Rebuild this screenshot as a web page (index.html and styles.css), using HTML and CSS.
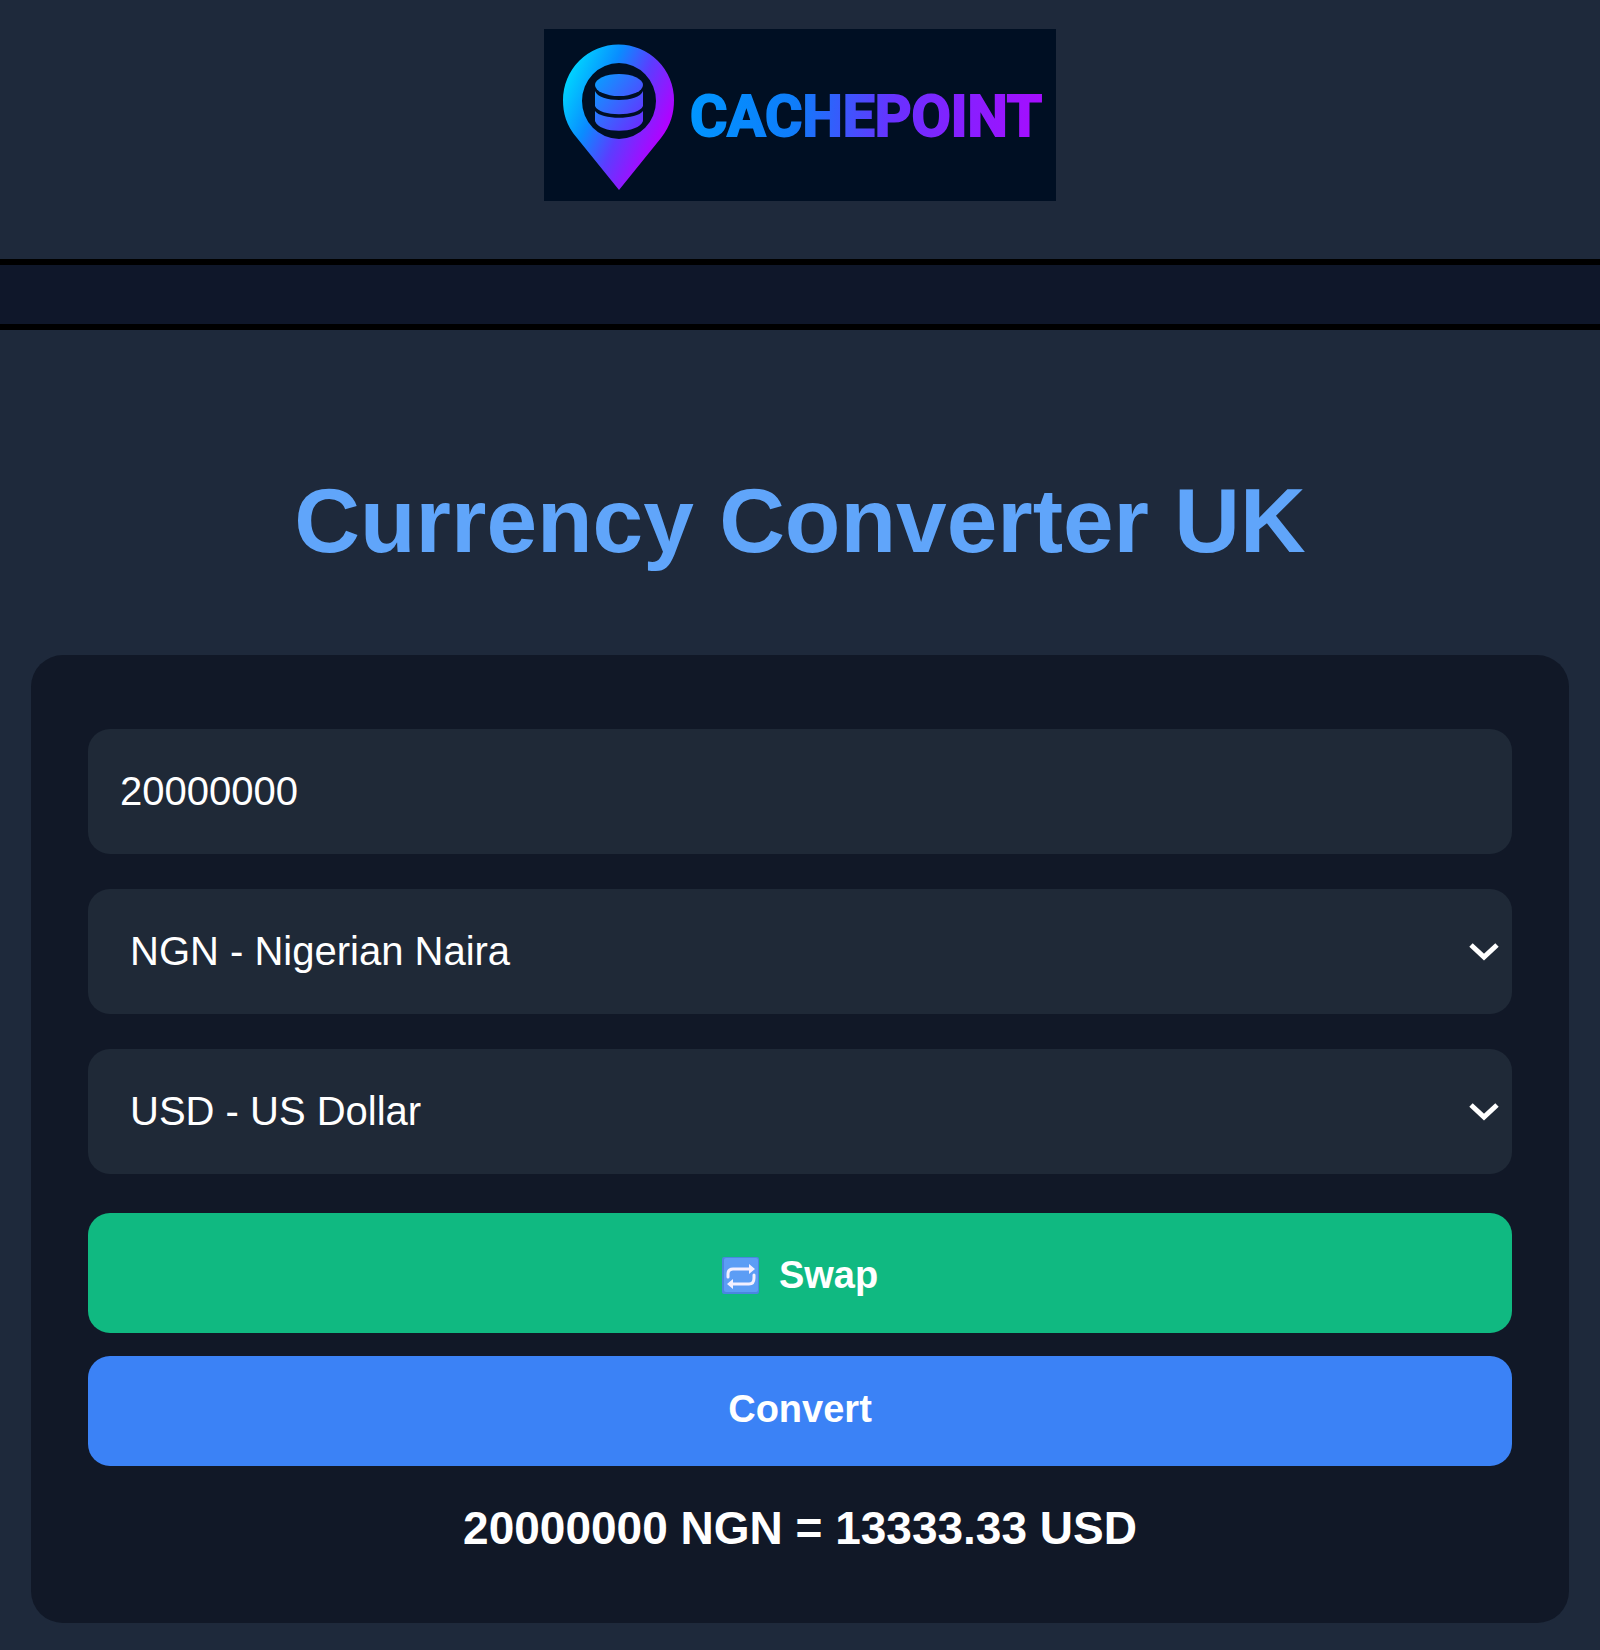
FILE: index.html
```html
<!DOCTYPE html>
<html lang="en">
<head>
  <meta charset="UTF-8">
  <meta name="viewport" content="width=device-width, initial-scale=1.0">
  <title>Currency Converter UK</title>
  <link rel="stylesheet" href="styles.css">
</head>
<body>

  <header class="site-header">
    <svg class="logo" viewBox="0 0 512 172" role="img" aria-label="CachePoint">
      <defs>
        <linearGradient id="pinFill" gradientUnits="userSpaceOnUse" x1="22" y1="56" x2="122" y2="102">
          <stop offset="0" stop-color="#00d0ff"/>
          <stop offset="0.32" stop-color="#0a8cff"/>
          <stop offset="0.62" stop-color="#5b3dff"/>
          <stop offset="1" stop-color="#b400ff"/>
        </linearGradient>
        <linearGradient id="diskFill" gradientUnits="userSpaceOnUse" x1="50" y1="52" x2="102" y2="92">
          <stop offset="0" stop-color="#0a9cff"/>
          <stop offset="1" stop-color="#6a2cff"/>
        </linearGradient>
        <linearGradient id="wordFill" gradientUnits="userSpaceOnUse" x1="148" y1="62" x2="498" y2="106">
          <stop offset="0" stop-color="#0096ff"/>
          <stop offset="0.3" stop-color="#0f7cfa"/>
          <stop offset="0.58" stop-color="#6a30ff"/>
          <stop offset="1" stop-color="#a80cff"/>
        </linearGradient>
      </defs>
      <rect width="512" height="172" fill="#000f23"/>
      <path fill="url(#pinFill)" fill-rule="evenodd" d="M75 161 L33 109 C22 96 19 84 19 71 A55 55 0 0 1 130 71 C130 84 127 96 117 109 Z M75 34 A37 38 0 1 0 75 110 A37 38 0 1 0 75 34 Z"/>
      <g fill="url(#diskFill)">
        <ellipse cx="75" cy="56" rx="24" ry="11"/>
        <path d="M51 62 C55 74 95 74 99 62 V77 C95 88 55 88 51 77 Z"/>
        <path d="M51 82 C57 91 93 91 99 82 V92 C95 105 55 105 51 92 Z"/>
      </g>
      <text class="logo-text" x="146" y="107" fill="url(#wordFill)" stroke="url(#wordFill)">CACHEPOINT</text>
    </svg>
  </header>

  <nav class="nav-bar"></nav>

  <main>
    <h1>Currency Converter UK</h1>

    <div class="card">
      <input type="number" id="amount" class="field" aria-label="Amount" value="20000000">

      <select id="from" class="field" aria-label="From currency">
        <option value="NGN" selected>NGN - Nigerian Naira</option>
        <option value="USD">USD - US Dollar</option>
      </select>

      <select id="to" class="field" aria-label="To currency">
        <option value="NGN">NGN - Nigerian Naira</option>
        <option value="USD" selected>USD - US Dollar</option>
      </select>

      <div class="button-group">
        <button class="swap" onclick="swapCurrencies()">
          <svg class="swap-icon" viewBox="0 0 37 37" aria-hidden="true">
            <rect width="37" height="37" rx="2" fill="#4a86e0"/>
            <rect x="2" y="1" width="34" height="34" rx="2" fill="#5c9df5"/>
            <g fill="none" stroke="#f3f0ff" stroke-width="3" stroke-linecap="round" stroke-linejoin="round">
              <path d="M6 20 V17 Q6 12 11 12 H29"/>
              <path d="M32 18 V21 Q32 27 27 27 H8"/>
            </g>
            <path fill="#f3f0ff" d="M27 7 L33 12 L27 17 Z M11 22 L5 27 L11 32 Z"/>
          </svg>
          Swap
        </button>
        <button class="convert" onclick="convertCurrency()">Convert</button>
      </div>

      <p class="result" id="result">20000000 NGN = 13333.33 USD</p>
    </div>
  </main>

  <script>
    // units per US dollar
    const rates = { USD: 1, NGN: 1500 };

    function convertCurrency() {
      const amount = parseFloat(document.getElementById('amount').value);
      const from = document.getElementById('from').value;
      const to = document.getElementById('to').value;
      const result = document.getElementById('result');

      if (isNaN(amount)) {
        result.textContent = 'Enter an amount';
        return;
      }
      const converted = (amount / rates[from] * rates[to]).toFixed(2);
      result.textContent = `${amount} ${from} = ${converted} ${to}`;
    }

    function swapCurrencies() {
      const from = document.getElementById('from');
      const to = document.getElementById('to');
      [from.value, to.value] = [to.value, from.value];
      convertCurrency();
    }
  </script>
</body>
</html>
```
FILE: styles.css
```css
* {
  box-sizing: border-box;
}

body {
  font-family: Arial, "Liberation Sans", sans-serif;
  background: #1e293b;
  color: #fff;
  margin: 0;
}

.site-header {
  display: flex;
  justify-content: center;
  padding: 29px 20px 58px;
}

.logo {
  width: 100%;
  max-width: 512px;
}

.logo-text {
  font-family: Roboto, sans-serif;
  font-size: 57px;
  font-weight: 700;
  stroke-width: 2px;
}

.nav-bar {
  height: 71px;
  background: #0f172a;
  border-top: 6px solid #000;
  border-bottom: 6px solid #000;
}

main {
  padding: 138px 31px 27px;
}

h1 {
  margin: 0 0 82px;
  color: #60a5fa;
  font-size: 91px;
  line-height: 105px;
  text-align: center;
}

.card {
  display: flex;
  flex-direction: column;
  gap: 35px;
  padding: 74px 57px 68px;
  background: #111827;
  border-radius: 32px;
}

.field {
  width: 100%;
  padding: 39px 32px;
  background-color: #1f2937;
  color: #fff;
  border: none;
  border-radius: 22px;
  font-family: inherit;
  font-size: 40px;
  line-height: 47px;
}

select.field {
  appearance: none;
  padding: 39px 42px;
  background-image: url("data:image/svg+xml,%3Csvg xmlns='http://www.w3.org/2000/svg' width='32' height='20' fill='none' stroke='white' stroke-width='5'%3E%3Cpath d='M3 3 L16 15 L29 3'/%3E%3C/svg%3E");
  background-repeat: no-repeat;
  background-position: right 12px center;
}

.button-group {
  display: flex;
  flex-direction: column;
  gap: 23px;
  padding-top: 4px;
}

button {
  display: flex;
  align-items: center;
  justify-content: center;
  gap: 20px;
  padding: 31px 32px 34px;
  color: #fff;
  border: none;
  border-radius: 22px;
  font-family: inherit;
  font-size: 38px;
  font-weight: bold;
  line-height: 45px;
  cursor: pointer;
}

.swap {
  padding: 40px 32px 35px;
  background: #10b981;
}

.swap-icon {
  width: 37px;
  height: 37px;
}

.convert {
  background: #3b82f6;
}

.result {
  margin: 0;
  font-size: 46px;
  font-weight: bold;
  line-height: 54px;
  text-align: center;
}

@media (max-width: 900px) {
  h1 {
    font-size: 48px;
    line-height: 56px;
  }
  .card {
    padding: 32px 24px;
  }
  .field, button, .result {
    font-size: 24px;
  }
}
```
